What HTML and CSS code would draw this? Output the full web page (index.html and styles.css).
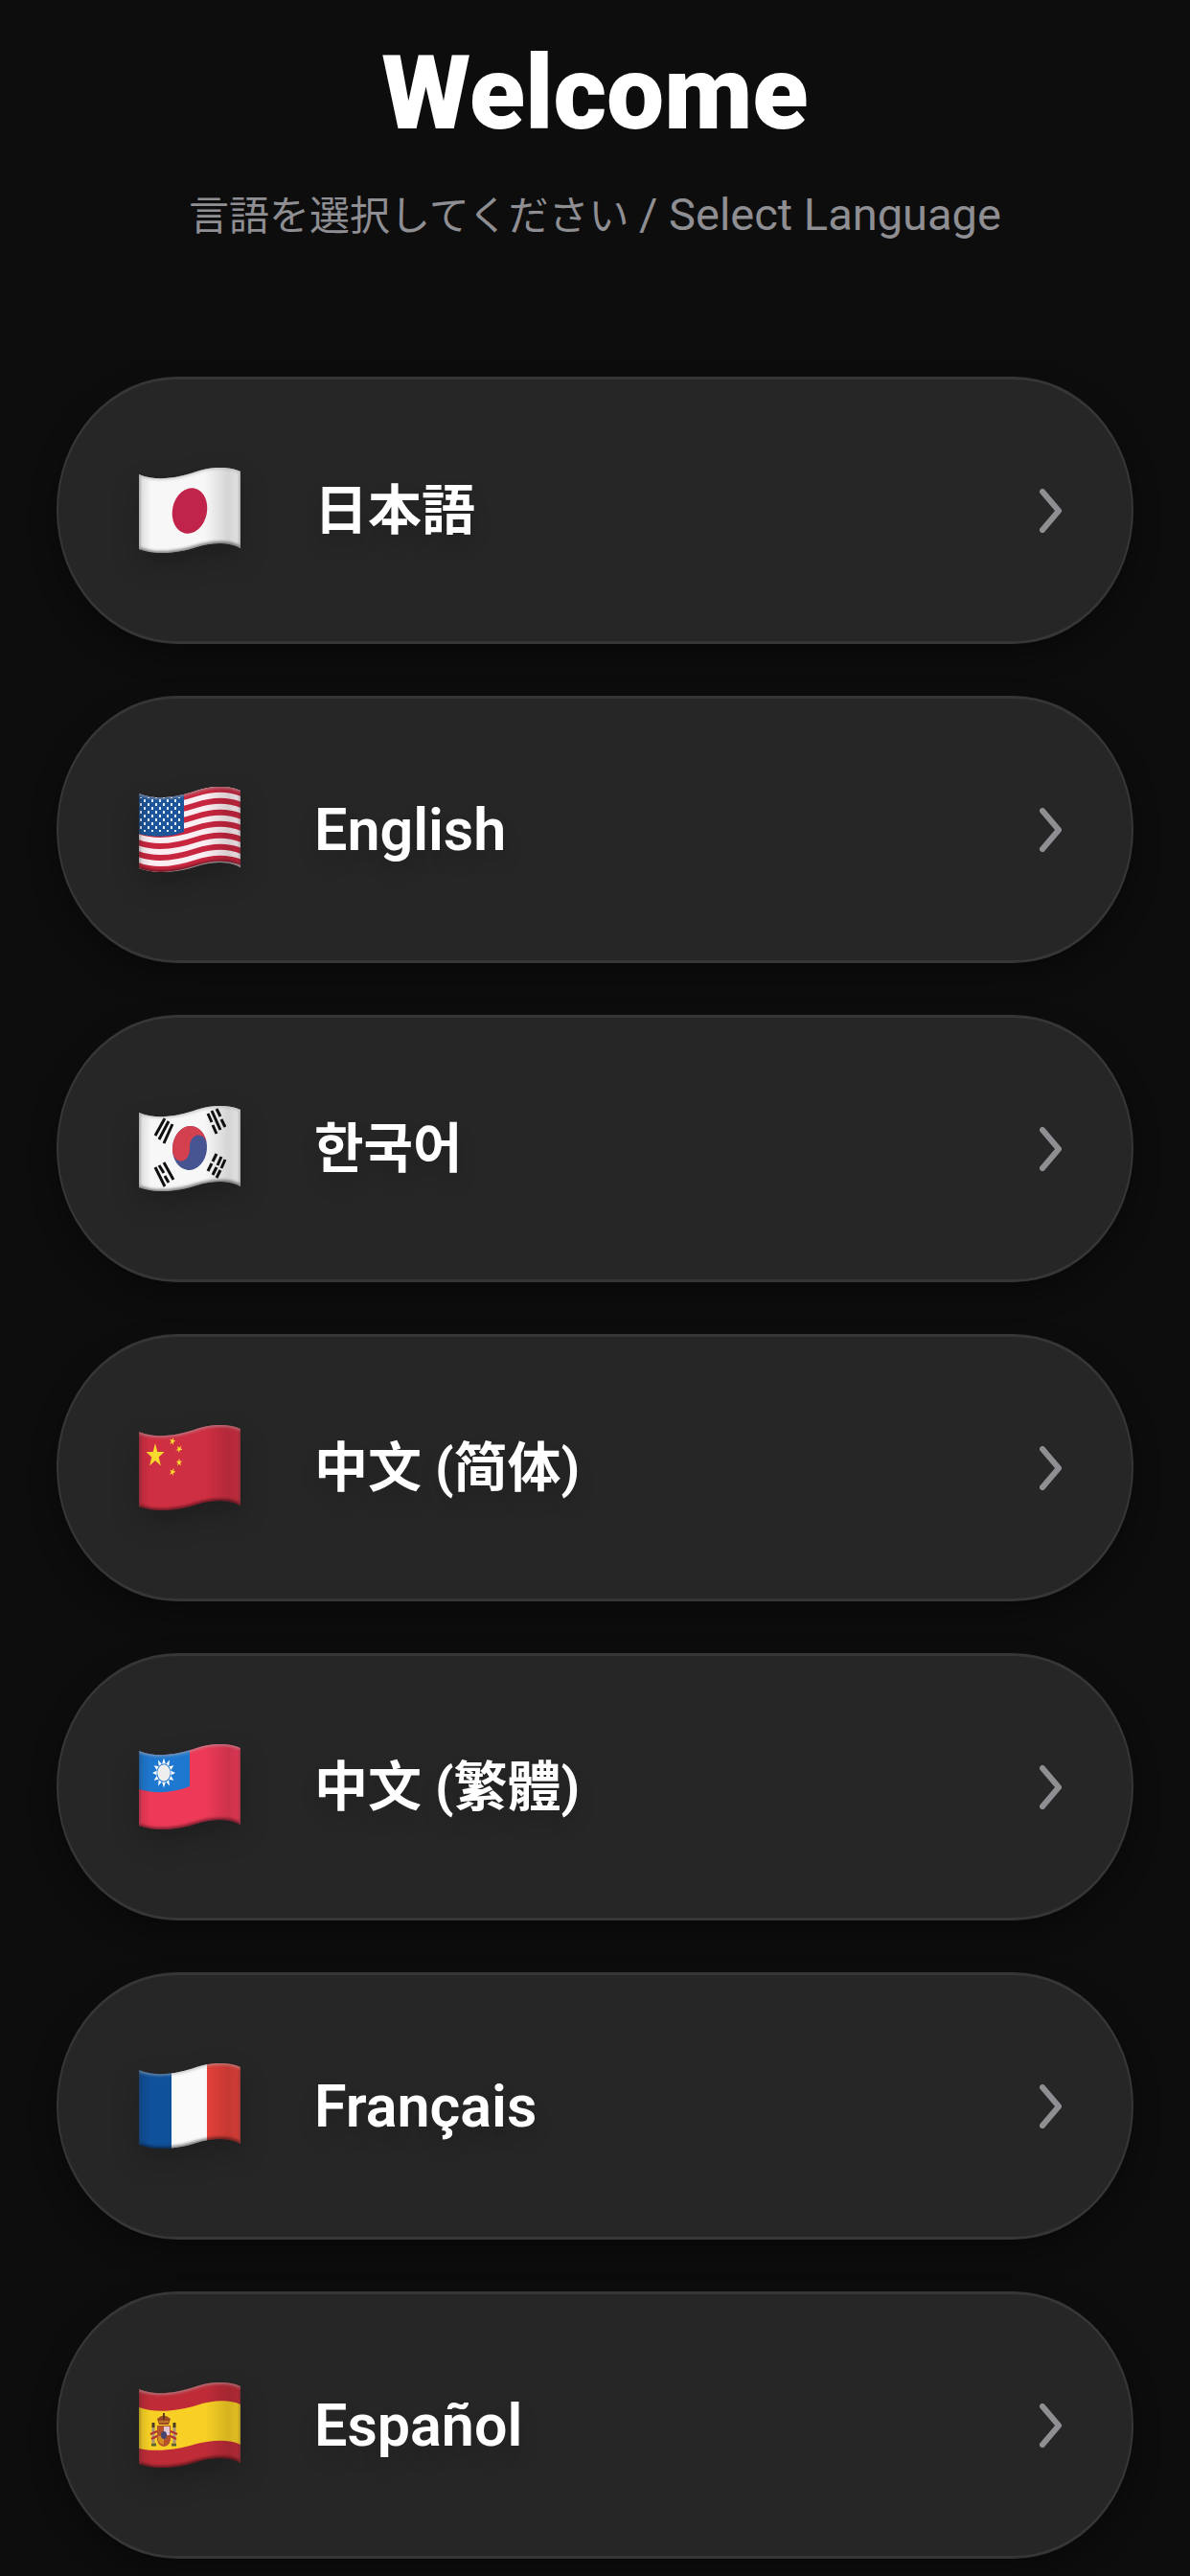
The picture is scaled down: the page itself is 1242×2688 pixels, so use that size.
FILE: index.html
```html
<!DOCTYPE html>
<html lang="ja">
  <head>
    <meta charset="utf-8">
    <meta name="viewport" content="width=device-width, initial-scale=1">
    <title>Welcome</title>
    <link rel="stylesheet" href="styles.css">
  </head>
  <body>
    <!-- Shared flag shapes -->
    <svg class="defs" width="0" height="0" aria-hidden="true">
      <defs>
        <path id="cloth" d="M0 7 C20 15 42 10 60 4 C78 -2 95 -1 106 4 V84 C94 77 76 78 60 83 C42 89 18 92 0 85 Z"/>
        <clipPath id="flag-clip"><use href="#cloth"/></clipPath>
        <path id="wave" d="M-1 0 C20 8 42 3 60 -3 C78 -9 95 -8 107 -3"/>
        <path id="star" d="M0 -10 L2.3 -3.1 9.5 -3.1 3.7 1.2 5.9 8.1 0 3.8 -5.9 8.1 -3.7 1.2 -9.5 -3.1 -2.3 -3.1 Z"/>
        <pattern id="stars" width="8" height="8" patternUnits="userSpaceOnUse">
          <rect x="1" y="1" width="2" height="3" fill="#e8f0fa"/>
          <rect x="5" y="5" width="2" height="3" fill="#e8f0fa"/>
        </pattern>
        <linearGradient id="fold" x1="0" x2="1" y1="0" y2="0">
          <stop offset="0" stop-color="#000" stop-opacity=".12"/>
          <stop offset=".12" stop-color="#000" stop-opacity="0"/>
          <stop offset=".65" stop-color="#000" stop-opacity="0"/>
          <stop offset=".88" stop-color="#000" stop-opacity=".14"/>
          <stop offset="1" stop-color="#000" stop-opacity=".08"/>
        </linearGradient>
        <filter id="soft" x="-10%" y="-10%" width="120%" height="120%"><feGaussianBlur stdDeviation="1.4"/></filter>
        <g id="shade">
          <use href="#cloth" fill="url(#fold)"/>
          <g fill="none" filter="url(#soft)">
            <path d="M0 7 C20 15 42 10 60 4 C78 -2 95 -1 106 4" stroke="#aaa" stroke-opacity=".7" stroke-width="3"/>
            <path d="M0 85 C18 92 42 89 60 83 C76 78 94 77 106 84" stroke="#000" stroke-opacity=".5" stroke-width="4"/>
            <path d="M0 7 V85 M106 4 V84" stroke="#333" stroke-opacity=".5" stroke-width="2"/>
          </g>
        </g>
      </defs>
    </svg>

    <header class="header">
      <h1>Welcome</h1>
      <p class="subtitle">言語を選択してください <span class="latin">/ Select Language</span></p>
    </header>

    <!-- Language list -->
    <main class="languages">
      <button type="button" class="language" lang="ja">
        <svg class="flag" viewBox="0 0 106 90" aria-hidden="true">
          <g clip-path="url(#flag-clip)">
            <rect width="106" height="92" fill="#f7f7f7"/>
            <ellipse cx="53" cy="45" rx="18" ry="24" fill="#c1244b" transform="rotate(12 53 45)"/>
            <use href="#shade"/>
          </g>
        </svg>
        <span class="name">日本語</span>
        <svg class="chevron" viewBox="0 0 24 46" aria-hidden="true"><path d="M3 3 L20 23 L3 43"/></svg>
      </button>

      <button type="button" class="language" lang="en">
        <svg class="flag" viewBox="0 0 106 90" aria-hidden="true">
          <g clip-path="url(#flag-clip)">
            <rect width="106" height="92" fill="#fbeef2"/>
            <g fill="none" stroke="#c8263f" stroke-width="6">
              <use href="#wave" y="10"/>
              <use href="#wave" y="22"/>
              <use href="#wave" y="34"/>
              <use href="#wave" y="46"/>
              <use href="#wave" y="58"/>
              <use href="#wave" y="70"/>
              <use href="#wave" y="82"/>
            </g>
            <path d="M0 0 H47 V47 C32 53 14 53 0 49 Z" fill="#1c5599"/>
            <path d="M1 11 H45 V47 H1 Z" fill="url(#stars)"/>
            <use href="#shade"/>
          </g>
        </svg>
        <span class="name">English</span>
        <svg class="chevron" viewBox="0 0 24 46" aria-hidden="true"><path d="M3 3 L20 23 L3 43"/></svg>
      </button>

      <button type="button" class="language" lang="ko">
        <svg class="flag" viewBox="0 0 106 90" aria-hidden="true">
          <g clip-path="url(#flag-clip)">
            <rect width="106" height="92" fill="#f7f7f7"/>
            <g transform="translate(53 44) rotate(5) scale(18 23)">
              <circle r="1" fill="#465591"/>
              <path d="M-.97 .25 A1 1 0 1 1 .97 -.25 A.5 .5 0 0 0 0 0 A.5 .5 0 0 1 -.97 .25 Z" fill="#d3414f"/>
            </g>
            <g stroke="#111" stroke-width="3" fill="none">
              <path d="M17 31 L27 13 M21 35 L31 16 M26 39 L35 19"/>
              <path d="M72 8 L76 17 M77 20 L81 29 M76 5 L85 25 M81 3 L85 11 M86 14 L90 22"/>
              <path d="M17 64 L27 84 M21 62 L26 70 M27 73 L31 80 M26 59 L36 77"/>
              <path d="M72 68 L76 60 M77 58 L81 50 M77 72 L81 64 M82 62 L86 53 M81 75 L85 67 M86 65 L90 56"/>
            </g>
            <use href="#shade"/>
          </g>
        </svg>
        <span class="name">한국어</span>
        <svg class="chevron" viewBox="0 0 24 46" aria-hidden="true"><path d="M3 3 L20 23 L3 43"/></svg>
      </button>

      <button type="button" class="language" lang="zh-Hans">
        <svg class="flag" viewBox="0 0 106 90" aria-hidden="true">
          <g clip-path="url(#flag-clip)">
            <rect width="106" height="92" fill="#cf2f42"/>
            <g fill="#f8d92d">
              <use href="#star" transform="translate(17 32) scale(1 1.3)"/>
              <use href="#star" transform="translate(35 17) rotate(15) scale(.34 .44)"/>
              <use href="#star" transform="translate(42 25) rotate(35) scale(.34 .44)"/>
              <use href="#star" transform="translate(42 39) scale(.34 .44)"/>
              <use href="#star" transform="translate(35 49) rotate(20) scale(.34 .44)"/>
            </g>
            <use href="#shade"/>
          </g>
        </svg>
        <span class="name">中文 (简体)</span>
        <svg class="chevron" viewBox="0 0 24 46" aria-hidden="true"><path d="M3 3 L20 23 L3 43"/></svg>
      </button>

      <button type="button" class="language" lang="zh-Hant">
        <svg class="flag" viewBox="0 0 106 90" aria-hidden="true">
          <g clip-path="url(#flag-clip)">
            <rect width="106" height="92" fill="#ee3a58"/>
            <path d="M0 0 H53 V44 C36 51 16 52 0 47 Z" fill="#1f78cf"/>
            <g transform="translate(26 30) scale(1 1.3)" fill="#fff">
              <path d="M0 -12 L2 -7 6 -10.4 5.2 -5.2 10.4 -6 7 -2 12 0 7 2 10.4 6 5.2 5.2 6 10.4 2 7 0 12 -2 7 -6 10.4 -5.2 5.2 -10.4 6 -7 2 -12 0 -7 -2 -10.4 -6 -5.2 -5.2 -6 -10.4 -2 -7 Z"/>
              <circle r="7" fill="none" stroke="#1f78cf" stroke-width="1"/>
              <circle r="6.5" fill="#eee"/>
            </g>
            <use href="#shade"/>
          </g>
        </svg>
        <span class="name">中文 (繁體)</span>
        <svg class="chevron" viewBox="0 0 24 46" aria-hidden="true"><path d="M3 3 L20 23 L3 43"/></svg>
      </button>

      <button type="button" class="language" lang="fr">
        <svg class="flag" viewBox="0 0 106 90" aria-hidden="true">
          <g clip-path="url(#flag-clip)">
            <rect width="34" height="92" fill="#10519b"/>
            <rect x="34" width="37" height="92" fill="#fafafa"/>
            <rect x="71" width="35" height="92" fill="#e5423a"/>
            <use href="#shade"/>
          </g>
        </svg>
        <span class="name">Français</span>
        <svg class="chevron" viewBox="0 0 24 46" aria-hidden="true"><path d="M3 3 L20 23 L3 43"/></svg>
      </button>

      <button type="button" class="language" lang="es">
        <svg class="flag" viewBox="0 0 106 90" aria-hidden="true">
          <g clip-path="url(#flag-clip)">
            <rect width="106" height="92" fill="#bf2c38"/>
            <path d="M0 26 C20 33 42 29 60 24 C78 18 95 18 106 23 V65 C95 59 76 60 60 64 C42 70 18 73 0 69 Z" fill="#f8d025"/>
            <!-- Coat of arms -->
            <g>
              <path d="M19 38 Q26 31 33 38 L31 44 H21 Z" fill="#9b4a24"/>
              <path d="M26 32 V39" stroke="#5e3520" stroke-width="2"/>
              <path d="M21 41 H31" stroke="#e0a62a" stroke-width="1"/>
              <path d="M19 45 H33 V60 Q32 66 26 67 Q20 66 19 60 Z" fill="#b4532b"/>
              <path d="M26 46 H32 V55 H26 Z" fill="#e2c6d3"/>
              <path d="M20 56 H26 V65 Q21 64 20 60 Z" fill="#d68a22"/>
              <ellipse cx="26" cy="55" rx="3" ry="4" fill="#46456f"/>
              <path d="M15 46 V63 M37 46 V63" stroke="#a9927a" stroke-width="3"/>
              <path d="M15 42 V47 M37 42 V47" stroke="#4b3b22" stroke-width="3"/>
              <path d="M12 54 L19 51 M13 59 L19 56 M33 51 L40 54 M33 56 L39 59" stroke="#b02f33" stroke-width="2"/>
              <path d="M13 65 H18 M34 65 H39" stroke="#5c6238" stroke-width="3"/>
            </g>
            <use href="#shade"/>
          </g>
        </svg>
        <span class="name">Español</span>
        <svg class="chevron" viewBox="0 0 24 46" aria-hidden="true"><path d="M3 3 L20 23 L3 43"/></svg>
      </button>
    </main>
  </body>
</html>
```
FILE: styles.css
```css
* {
  box-sizing: border-box;
}

body {
  margin: 0;
  padding: 32px 59px 20px;
  background-color: #0d0d0d;
  color: #fff;
  font-family: Roboto, "Noto Sans CJK JP", sans-serif;
}

.defs {
  position: absolute;
}

.header {
  text-align: center;
  margin-bottom: 135px;
}

h1 {
  margin: 0 0 28px;
  font-size: 107px;
  font-weight: 900;
  line-height: 132px;
}

.subtitle {
  margin: 0;
  color: #8e8e93;
  font-size: 42px;
  line-height: 64px;
}

.latin {
  font-size: 47px;
}

.languages {
  display: flex;
  flex-direction: column;
  gap: 54px;
}

.language {
  display: flex;
  align-items: center;
  width: 100%;
  height: 279px;
  padding: 0 72px 0 84px;
  border: solid #363636;
  border-width: 3px 2px;
  border-radius: 126px / 140px;
  background-color: #262626;
  box-shadow: 0 12px 28px rgba(0, 0, 0, 0.35);
  color: #fff;
  font-family: inherit;
  font-size: 56px;
  font-weight: 700;
  text-align: left;
  cursor: pointer;
}

.language:hover {
  background-color: #2e2e2e;
}

.language:lang(en),
.language:lang(fr),
.language:lang(es) {
  font-size: 61px;
  font-weight: 600;
}

.language:lang(ko) {
  font-family: Roboto, "Noto Sans CJK KR", sans-serif;
}

.language:lang(zh-Hans) {
  font-family: Roboto, "Noto Sans CJK SC", sans-serif;
}

.language:lang(zh-Hant) {
  font-family: Roboto, "Noto Sans CJK TC", sans-serif;
}

.flag {
  width: 106px;
  height: 90px;
  margin-right: 77px;
  filter: drop-shadow(0 12px 14px rgba(0, 0, 0, 0.2));
}

.name {
  flex: 1;
  line-height: 80px;
  text-shadow: 0 12px 20px rgba(0, 0, 0, 0.15);
}

.chevron {
  width: 24px;
  height: 46px;
  fill: none;
  stroke: #8e8e93;
  stroke-width: 6px;
  stroke-linecap: round;
  stroke-linejoin: round;
}
```
